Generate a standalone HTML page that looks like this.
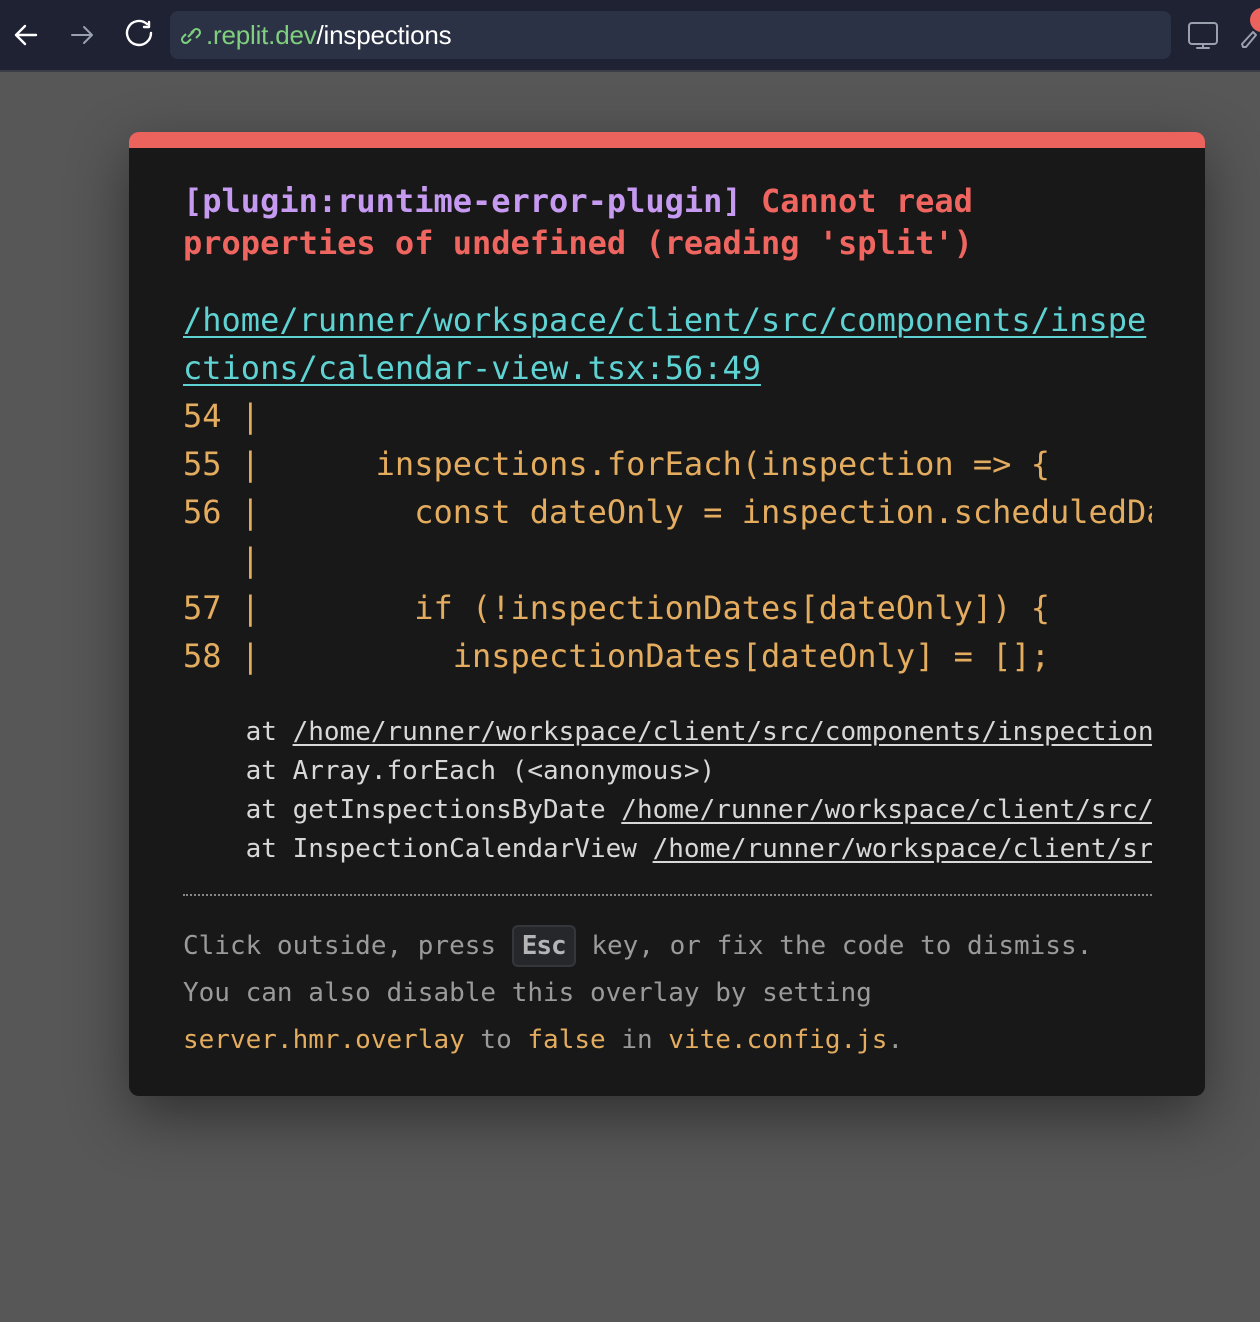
<!DOCTYPE html>
<html><head><meta charset="utf-8"><style>
*{margin:0;padding:0;box-sizing:border-box}
body{width:1260px;height:1322px;background:#575757;position:relative;overflow:hidden;font-family:"DejaVu Sans Mono","Liberation Mono",monospace}
.top{position:absolute;left:0;top:0;width:1260px;height:72px;background:#1e2233;border-bottom:2px solid #3a3d47}
.url{position:absolute;left:170px;top:11px;width:1001px;height:48px;background:#2c3245;border-radius:8px}
.url span{position:absolute;left:36px;top:9px;font-family:"Liberation Sans",sans-serif;font-size:26px;color:#fff;letter-spacing:-0.2px}
.card{position:absolute;left:129px;top:132px;width:1076px;height:964px;background:#181818;border-radius:10px;border-top:16px solid #ec625c;box-shadow:0 20px 60px rgba(0,0,0,.45);overflow:hidden}
.abs{position:absolute;left:183px;white-space:pre;overflow:hidden;width:969px}
.t{top:180px;font-size:32px;line-height:42px;font-weight:bold;color:#ef6560}
.t b{color:#c59af0}
.p{top:296px;font-size:32px;line-height:48px;color:#5fd3d3;text-decoration:underline;text-underline-offset:5px;text-decoration-thickness:2px}
.c{top:392px;font-size:32px;line-height:48px;color:#e3ac5e}
.s{top:713px;font-size:26px;line-height:39px;color:#d8d8d8}
.s u{text-underline-offset:4px}
.hr{position:absolute;left:183px;top:894px;width:969px;border-top:2px dotted #888}
.f{top:923px;font-size:26px;line-height:47px;color:#9a9a9a;overflow:visible}
.f i{font-style:normal;color:#e3ac5e}
.k{display:inline-block;background:#26272b;border:2px solid #35363b;border-radius:6px;color:#b5b5b8;font-weight:bold;line-height:38px;padding:0 8px;letter-spacing:-1px}
</style></head><body>
<div class="top">
<svg width="1260" height="70" style="position:absolute;left:0;top:0" fill="none" stroke-linecap="round" stroke-linejoin="round">
<path d="M36 35H16M25 26l-9 9 9 9" stroke="#fff" stroke-width="2.4"/>
<path d="M72 35h20M84 27l8 8-8 8" stroke="#9aa0ad" stroke-width="2"/>
<path d="M151 33a12 12 0 1 1-4-9M149 22v5h-5" stroke="#fff" stroke-width="2.4"/>
<path d="M1138 35h15M1147 29l6 6-6 6" stroke="#8a8f9c" stroke-width="1.8"/>
<rect x="1189" y="23" width="28" height="21" rx="3" stroke="#9aa0ad" stroke-width="2"/>
<path d="M1203 44v4M1197 48h12" stroke="#9aa0ad" stroke-width="2"/>
<path d="M1243 47l3 0 10-12-3-3-11 12z" stroke="#9aa0ad" stroke-width="2"/>
<circle cx="1262" cy="20" r="12" fill="#ec625c" stroke="none"/>
</svg>
<div class="url">
<svg width="30" height="30" style="position:absolute;left:6px;top:10px" fill="none" stroke="#7fcf7f" stroke-width="2"><path d="M12 16l6-6M10 13l-3 3a3.5 3.5 0 0 0 5 5l3-3M20 17l3-3a3.5 3.5 0 0 0-5-5l-3 3"/></svg>
<span><span style="position:static;color:#7fcf7f">.replit.dev</span>/inspections</span>
</div>
</div>
<div class="card"></div>
<div class="abs t"><b>[plugin:runtime-error-plugin]</b> Cannot read
properties of undefined (reading 'split')</div>
<div class="abs p">/home/runner/workspace/client/src/components/inspe
ctions/calendar-view.tsx:56:49</div>
<div class="abs c">54 |
55 |      inspections.forEach(inspection =&gt; {
56 |        const dateOnly = inspection.scheduledDate.split('T')[0];
   |
57 |        if (!inspectionDates[dateOnly]) {
58 |          inspectionDates[dateOnly] = [];</div>
<div class="abs s">    at <u>/home/runner/workspace/client/src/components/inspections/calendar-view.tsx:56:49</u>
    at Array.forEach (&lt;anonymous&gt;)
    at getInspectionsByDate <u>/home/runner/workspace/client/src/components/inspections</u>
    at InspectionCalendarView <u>/home/runner/workspace/client/src/components</u></div>
<div class="hr"></div>
<div class="abs f">Click outside, press <span class="k">Esc</span> key, or fix the code to dismiss.
You can also disable this overlay by setting
<i>server.hmr.overlay</i> to <i>false</i> in <i>vite.config.js</i>.</div>
</body></html>
